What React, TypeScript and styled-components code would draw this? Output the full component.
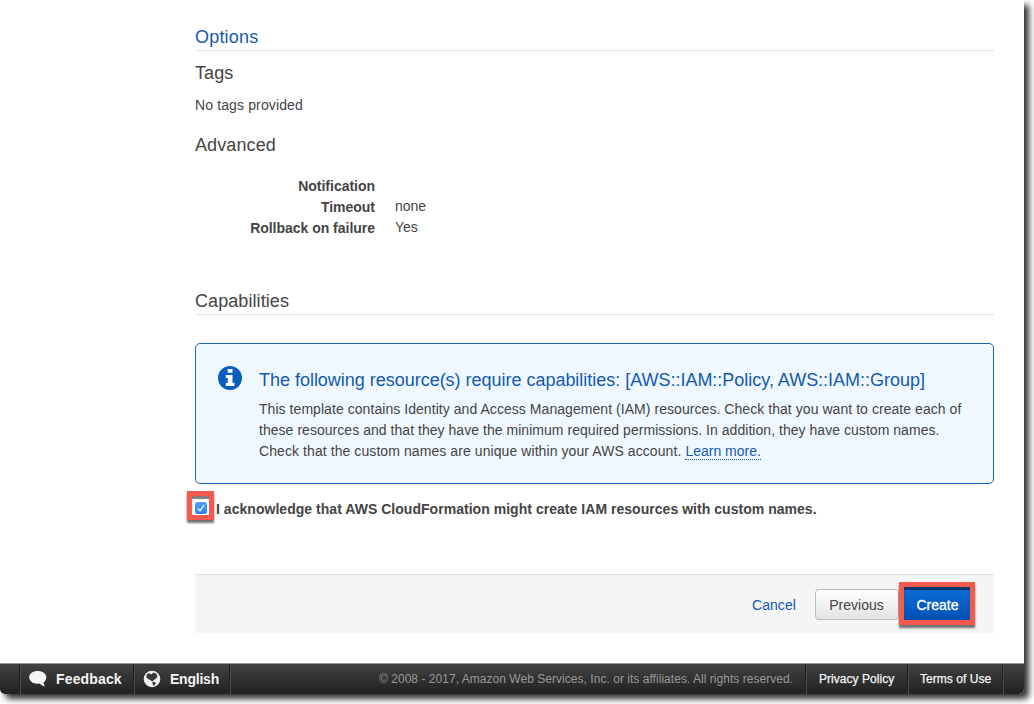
import React from "react";
import styled, { createGlobalStyle } from "styled-components";

const GlobalStyle = createGlobalStyle`
  html, body { margin: 0; padding: 0; background: #fff; overflow: hidden; }
  body { font-family: "Liberation Sans", Arial, sans-serif; color: #444; }
  *, *::before, *::after { box-sizing: border-box; }
`;

const Screen = styled.div`
  width: 1034px;
  height: 704px;
  overflow: hidden;
`;

const Window = styled.div`
  width: 1024px;
  height: 694px;
  display: flex;
  flex-direction: column;
  background: #fff;
  border-radius: 0 0 5px 5px;
  box-shadow: 5px 5px 6px rgba(0, 0, 0, 0.8);
`;

const Content = styled.main`
  flex: 1;
  padding: 23px 30px 0 195px;
`;

const SectionTitle = styled.h2<{ $link?: boolean }>`
  margin: 0;
  height: 28px;
  border-bottom: 1px solid #e3e3e3;
  font-size: 18px;
  line-height: 28px;
  font-weight: 400;
  letter-spacing: ${(p) => (p.$link ? "0.2px" : "0.08px")};
  color: ${(p) => (p.$link ? "#1359b0" : "#444")};
`;

const SubTitle = styled.h3<{ $top: number }>`
  margin: ${(p) => p.$top}px 0 0;
  font-size: 18px;
  line-height: 22px;
  font-weight: 400;
  letter-spacing: 0.1px;
`;

const Text = styled.p<{ $top: number }>`
  margin: ${(p) => p.$top}px 0 0;
  font-size: 14px;
  line-height: 21px;
  letter-spacing: 0.13px;
`;

const Details = styled.dl`
  margin: 20px 0 48px;
  display: grid;
  grid-template-columns: 180px 1fr;
  grid-auto-rows: 21px;
  column-gap: 20px;
  font-size: 14px;
`;

const Term = styled.dt`
  text-align: right;
  font-weight: 700;
  line-height: 21px;
  letter-spacing: -0.02px;
`;

const Value = styled.dd`
  margin: 0;
  line-height: 19px;
`;

const InfoBox = styled.section`
  margin-top: 28px;
  height: 141px;
  padding: 24px 20px 0 22px;
  display: flex;
  border: 1px solid #1b66b5;
  border-radius: 5px;
  background: #f0f8ff;
`;

const InfoIcon = styled.svg`
  width: 24px;
  height: 24px;
  margin: -2.5px 17px 0 0;
  flex: none;
`;

const InfoTitle = styled.h3`
  margin: 0 0 7px;
  font-size: 18px;
  line-height: 24px;
  font-weight: 400;
  letter-spacing: -0.02px;
  white-space: nowrap;
  color: #1359b0;
`;

const InfoLine = styled.div<{ $spacing: number }>`
  font-size: 14px;
  line-height: 21px;
  white-space: nowrap;
  letter-spacing: ${(p) => p.$spacing}px;
`;

const LearnMore = styled.a`
  letter-spacing: 0;
  color: #1359b0;
  border-bottom: 1px dotted #1359b0;
`;

const Acknowledge = styled.label`
  display: flex;
  margin: 7px 0 0 -8px;
  height: 36px;
  font-size: 14px;
  line-height: 36px;
  font-weight: 700;
  letter-spacing: 0.035px;
`;

const CheckFrame = styled.span`
  display: flex;
  align-items: center;
  justify-content: center;
  width: 27px;
  height: 29px;
  margin-right: 2px;
  border: 5px solid #f55a4e;
  box-shadow: 0 3px 2px rgba(0, 0, 0, 0.55), inset 0 3px 1px rgba(0, 0, 0, 0.5);
`;

const CheckBox = styled.span`
  display: flex;
  width: 12px;
  height: 12px;
  margin: 4px 0 0 1px;
  border-radius: 2.5px;
  background: linear-gradient(#4f9ff5, #2b83f3);
`;

const Actions = styled.div`
  margin-top: 47px;
  height: 59px;
  padding: 7px 19px 0 0;
  display: flex;
  justify-content: flex-end;
  border-top: 1px solid #e0e0e0;
  background: #f5f5f5;
  font-size: 14px;
`;

const Cancel = styled.a`
  margin: 0 19px 0 0;
  line-height: 46px;
  letter-spacing: 0.08px;
  color: #1359b0;
`;

const Previous = styled.button`
  width: 84px;
  height: 31px;
  margin-top: 7px;
  padding: 0 1px 0 0;
  border: 1px solid #bbb;
  border-radius: 4px;
  background: linear-gradient(#fff, #e3e3e3);
  font: 14px "Liberation Sans", Arial, sans-serif;
  color: #444;
`;

const Create = styled.button`
  width: 76px;
  height: 43px;
  padding: 2px 0 0 1px;
  border: 5px solid #f55a4e;
  background: linear-gradient(#0a6fd6, #0350b4);
  box-shadow: 0 3px 2px rgba(0, 0, 0, 0.55), inset 0 3px 1px rgba(0, 0, 0, 0.5);
  font: 14px "Liberation Sans", Arial, sans-serif;
  color: #fff;
  -webkit-text-stroke: 0.3px #fff;
`;

const Footer = styled.footer`
  height: 31px;
  display: flex;
  border-top: 1px solid #999;
  border-radius: 0 0 5px 5px;
  background: linear-gradient(#424242, #212121);
  color: #f4f4f4;
`;

const FooterCell = styled.div<{ $width: number; $pad?: number; $small?: boolean; $spacing?: number }>`
  width: ${(p) => p.$width}px;
  padding-left: ${(p) => p.$pad ?? 0}px;
  display: flex;
  align-items: center;
  white-space: nowrap;
  border-right: 1px solid #4a4a4a;
  box-shadow: inset -1px 0 #222;
  font-size: ${(p) => (p.$small ? 12 : 14)}px;
  font-weight: ${(p) => (p.$small ? 400 : 700)};
  letter-spacing: ${(p) => p.$spacing ?? 0}px;
`;

const Copyright = styled(FooterCell)`
  color: #999;
`;

const FooterLink = styled(FooterCell)`
  -webkit-text-stroke: 0.25px #f4f4f4;
`;

const FooterIcon = styled.svg`
  width: 18px;
  height: 18px;
  margin-right: 9px;
  flex: none;
`;

export default function App() {
  return (
    <Screen>
      <GlobalStyle />
      <Window>
        <Content>
          <SectionTitle $link>Options</SectionTitle>
          <SubTitle $top={11}>Tags</SubTitle>
          <Text $top={11}>No tags provided</Text>
          <SubTitle $top={18}>Advanced</SubTitle>
          <Details>
            <Term>Notification</Term>
            <Value />
            <Term>Timeout</Term>
            <Value>none</Value>
            <Term>Rollback on failure</Term>
            <Value>Yes</Value>
          </Details>
          <SectionTitle>Capabilities</SectionTitle>
          <InfoBox>
            <InfoIcon viewBox="0 0 24 24">
              <circle cx="12" cy="12" r="12" fill="#0a5fbd" />
              <path fill="#fff" d="M9.700 3.100h4.800v3.700H9.700zM7.800 9h6.700v7.700h2v3.200H7.800v-3.200h2v-4.600h-2z" />
            </InfoIcon>
            <div>
              <InfoTitle>The following resource(s) require capabilities: [AWS::IAM::Policy, AWS::IAM::Group]</InfoTitle>
              <InfoLine $spacing={0.055}>This template contains Identity and Access Management (IAM) resources. Check that you want to create each of</InfoLine>
              <InfoLine $spacing={0.04}>these resources and that they have the minimum required permissions. In addition, they have custom names.</InfoLine>
              <InfoLine $spacing={0.08}>
                Check that the custom names are unique within your AWS account. <LearnMore>Learn more.</LearnMore>
              </InfoLine>
            </div>
          </InfoBox>
          <Acknowledge>
            <CheckFrame>
              <CheckBox>
                <svg width="12" height="12" viewBox="0 0 12 12" fill="none" stroke="#fff" strokeWidth="1.2">
                  <path d="M2.800 6.300 5 8.700 9.200 2.900" />
                </svg>
              </CheckBox>
            </CheckFrame>
            <span>I acknowledge that AWS CloudFormation might create IAM resources with custom names.</span>
          </Acknowledge>
          <Actions>
            <Cancel>Cancel</Cancel>
            <Previous>Previous</Previous>
            <Create>Create</Create>
          </Actions>
        </Content>
        <Footer>
          <FooterCell $width={21} />
          <FooterCell $width={114} $pad={8} $spacing={0.15}>
            <FooterIcon viewBox="0 0 18 18">
              <path fill="#f4f4f4" d="M8.700 1C13.500 1 17.300 3.600 17.300 7.300c0 2.300-1.100 4-2.700 5.200.1 1.600.6 2.800 1.500 3.800-2.300 0-4-.9-5.100-2.700-.7.100-1.500.2-2.300.2C3.900 13.800.2 11 .2 7.300S3.900 1 8.700 1z" />
            </FooterIcon>
            <span>Feedback</span>
          </FooterCell>
          <FooterCell $width={96} $pad={8} $spacing={-0.22}>
            <FooterIcon viewBox="0 0 18 18">
              <circle cx="9" cy="9" r="8.300" fill="#f1f1f1" />
              <path fill="#393939" d="M3.600 4.800 6 3l1.800 1.300 1.300-.4L10 2.600l3 .8 1.500 2.400-1.300 2.600-2.600 1.800-1.300 1.600-1.700-1.500-2.600-1.400-1.600-1.700z" />
              <path fill="#393939" d="m9.400 12.200 2.200-.4 1.200 1.200-.8 1.700-1.600 1-.8-1.500z" />
            </FooterIcon>
            <span>English</span>
          </FooterCell>
          <Copyright $width={576} $pad={148} $small $spacing={0.035}>
            © 2008 - 2017, Amazon Web Services, Inc. or its affiliates. All rights reserved.
          </Copyright>
          <FooterLink $width={102} $pad={12} $small $spacing={0.04}>Privacy Policy</FooterLink>
          <FooterLink $width={95} $pad={11} $small $spacing={0.04}>Terms of Use</FooterLink>
        </Footer>
      </Window>
    </Screen>
  );
}
